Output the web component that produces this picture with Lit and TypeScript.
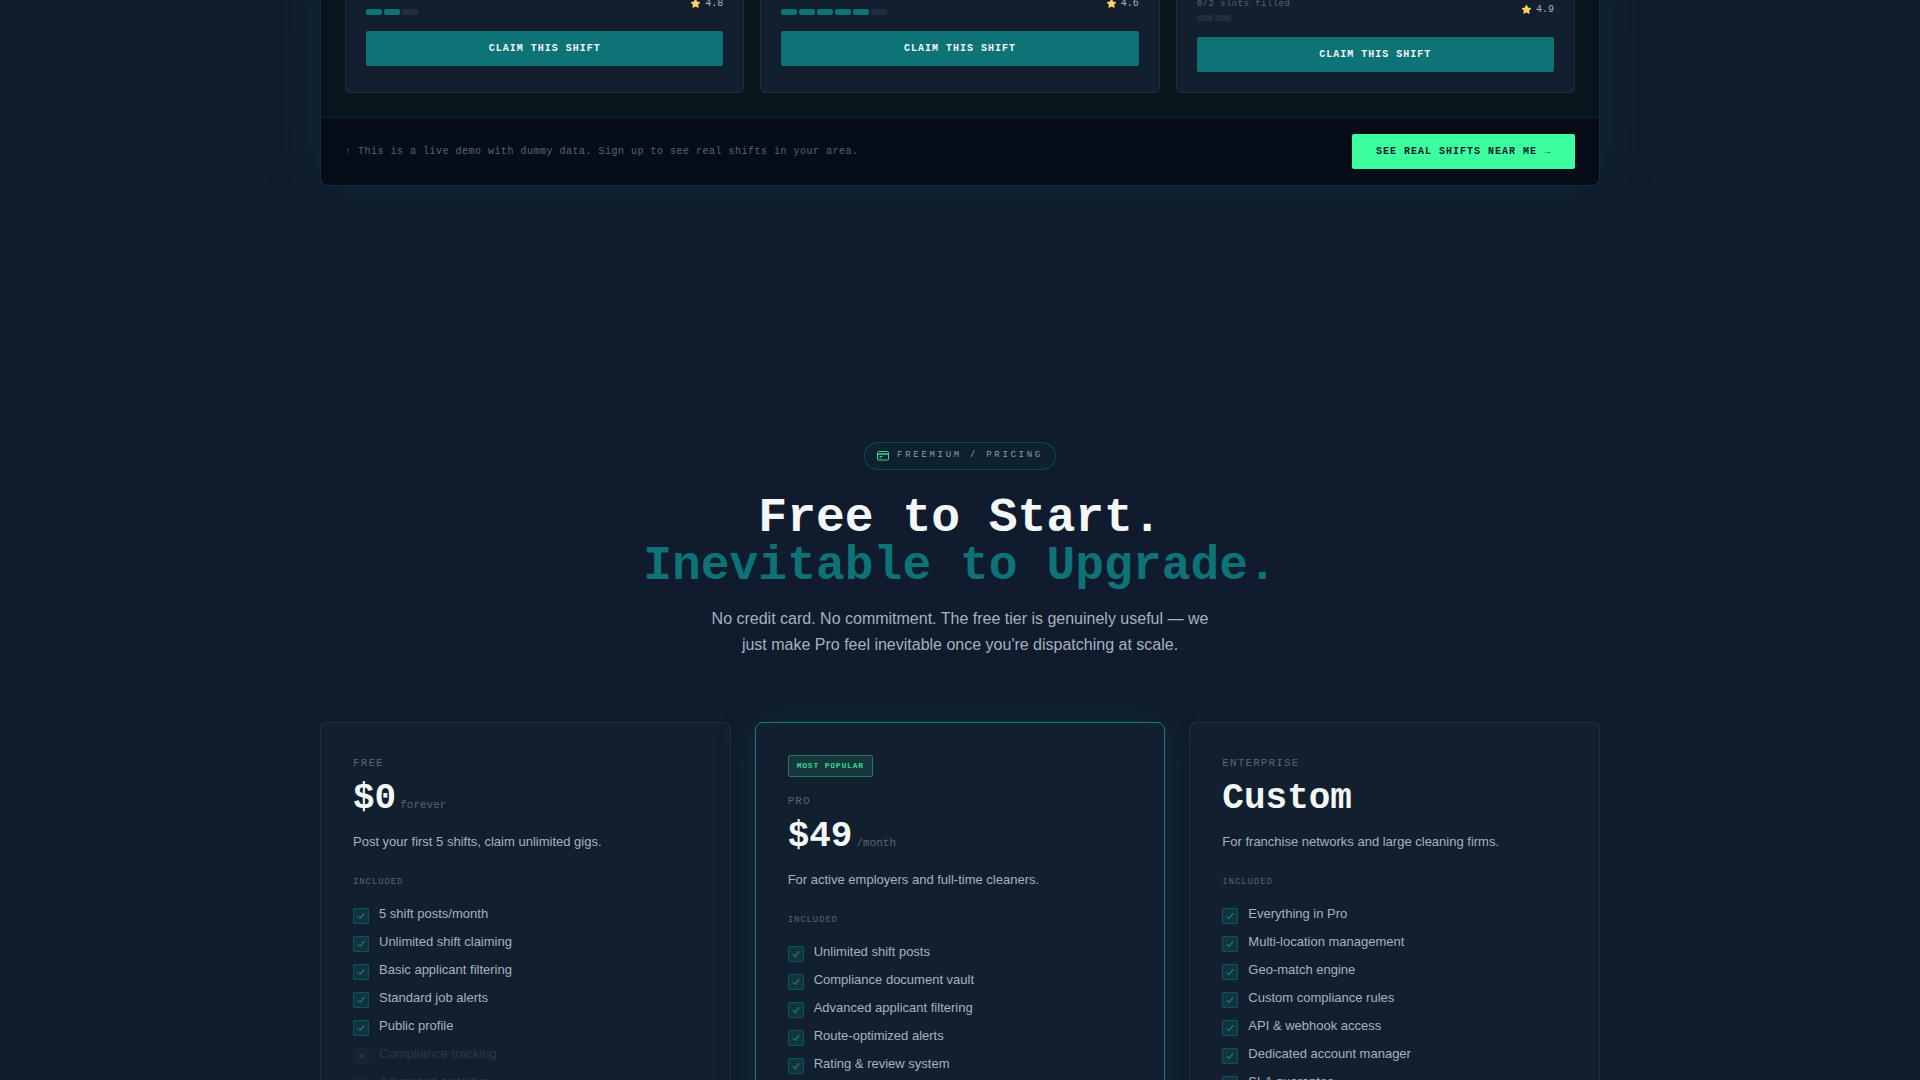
import { LitElement, html, css, svg, nothing } from "lit";
import { customElement, property } from "lit/decorators.js";
import { classMap } from "lit/directives/class-map.js";

interface Shift {
  filled: number;
  total: number;
  rating: string;
  low?: boolean;
}

interface Feature {
  label: string;
  off?: boolean;
}

interface Plan {
  name: string;
  price: string;
  period?: string;
  summary: string;
  badge?: string;
  features: Feature[];
}

const shifts: Shift[] = [
  { filled: 2, total: 3, rating: "4.8" },
  { filled: 5, total: 6, rating: "4.6" },
  { filled: 0, total: 2, rating: "4.9", low: true },
];

const plans: Plan[] = [
  {
    name: "Free",
    price: "$0",
    period: "forever",
    summary: "Post your first 5 shifts, claim unlimited gigs.",
    features: [
      { label: "5 shift posts/month" },
      { label: "Unlimited shift claiming" },
      { label: "Basic applicant filtering" },
      { label: "Standard job alerts" },
      { label: "Public profile" },
      { label: "Compliance tracking", off: true },
      { label: "Advanced analytics", off: true },
    ],
  },
  {
    name: "Pro",
    price: "$49",
    period: "/month",
    summary: "For active employers and full-time cleaners.",
    badge: "Most popular",
    features: [
      { label: "Unlimited shift posts" },
      { label: "Compliance document vault" },
      { label: "Advanced applicant filtering" },
      { label: "Route-optimized alerts" },
      { label: "Rating & review system" },
    ],
  },
  {
    name: "Enterprise",
    price: "Custom",
    summary: "For franchise networks and large cleaning firms.",
    features: [
      { label: "Everything in Pro" },
      { label: "Multi-location management" },
      { label: "Geo-match engine" },
      { label: "Custom compliance rules" },
      { label: "API & webhook access" },
      { label: "Dedicated account manager" },
      { label: "SLA guarantee" },
    ],
  },
];

const tokens = css`
  :host {
    --mono: "Liberation Mono", monospace;
    --sans: "Liberation Sans", sans-serif;
    --teal: #0d7377;
    --mint: #3dffa0;
    --text: #f4f7f8;
    --soft: #a6b2bf;
    --dim: #566573;
    --line: rgba(255, 255, 255, 0.07);
    --card: #121f2e;
  }
  * {
    box-sizing: border-box;
  }
`;

@customElement("shift-card")
class ShiftCard extends LitElement {
  @property({ attribute: false }) shift!: Shift;

  static styles = [
    tokens,
    css`
      :host {
        display: block;
        padding: 20px;
        background: var(--card);
        border: 1px solid var(--line);
        border-radius: 6px;
        font-family: var(--mono);
      }
      .status {
        display: flex;
        align-items: center;
        justify-content: space-between;
        margin-bottom: 16px;
      }
      .low {
        margin-top: 6px;
      }
      .caption {
        margin-bottom: 3px;
        font-size: 9px;
        line-height: 16px;
        letter-spacing: 0.05em;
        color: var(--dim);
      }
      .slots {
        display: flex;
        gap: 2px;
      }
      .slot {
        width: 16px;
        height: 6px;
        border-radius: 2px;
        background: #222e3d;
      }
      .taken {
        background: var(--teal);
      }
      .rating {
        display: flex;
        align-items: center;
        gap: 4px;
        padding-top: 2px;
        font-size: 10px;
        line-height: 17px;
        color: var(--soft);
      }
      .star {
        width: 11px;
        height: 11px;
        fill: #ffd166;
      }
      .claim {
        display: block;
        width: 100%;
        padding: 12px 24px;
        border: 0;
        border-radius: 2px;
        background: var(--teal);
        color: var(--text);
        font: bold 10px/11px var(--mono);
        letter-spacing: 1px;
        text-transform: uppercase;
        cursor: pointer;
      }
    `,
  ];

  render() {
    const { filled, total, rating, low } = this.shift;
    return html`
      <div class=${classMap({ status: true, low: !!low })}>
        <div>
          <div class="caption">${filled}/${total} slots filled</div>
          <div class="slots">
            ${Array.from(
              { length: total },
              (_, i) => html`<span class=${classMap({ slot: true, taken: i < filled })}></span>`
            )}
          </div>
        </div>
        <div class="rating">
          <svg class="star" viewBox="0 0 24 24" aria-hidden="true">
            <path
              d="M12 2c.5 0 .9.300 1.100.700l2.400 5.100 5.600.700c1 .100 1.400 1.400.700 2.100l-4.100 3.900 1.100 5.500c.200 1-.900 1.800-1.800 1.300L12 18.600l-5 2.700c-.900.500-2-.300-1.800-1.300l1.100-5.500-4.100-3.900c-.700-.700-.300-2 .700-2.100l5.600-.700 2.400-5.100c.200-.400.600-.700 1.100-.700z"
            />
          </svg>
          <span>${rating}</span>
        </div>
      </div>
      <button class="claim" type="button">Claim this shift</button>
    `;
  }
}

@customElement("plan-card")
class PlanCard extends LitElement {
  @property({ attribute: false }) plan!: Plan;

  static styles = [
    tokens,
    css`
      :host {
        display: block;
        padding: 32px;
        background: var(--card);
        border: 1px solid var(--line);
        border-radius: 8px;
      }
      :host([featured]) {
        border-color: #157b7a;
        box-shadow: 0 0 40px rgba(13, 115, 119, 0.2);
      }
      .badge {
        display: inline-block;
        vertical-align: top;
        margin-bottom: 16px;
        padding: 4px 8px;
        border: 1px solid #2a7567;
        border-radius: 2px;
        background: #16373b;
        color: #37d592;
        font: bold 8px/12px var(--mono);
        letter-spacing: 0.1em;
        text-transform: uppercase;
      }
      .name {
        margin: 0 0 10px;
        font: 11px/16px var(--mono);
        letter-spacing: 0.1em;
        text-transform: uppercase;
        color: var(--dim);
      }
      .price {
        display: flex;
        align-items: baseline;
        gap: 4px;
        height: 36px;
        margin-bottom: 16px;
        font-family: var(--mono);
      }
      .amount {
        font-size: 36px;
        line-height: 36px;
        font-weight: bold;
        color: var(--text);
      }
      .period {
        font-size: 11px;
        line-height: 18px;
        color: var(--dim);
      }
      .summary {
        margin: 0 0 24px;
        font: 13px/18px var(--sans);
        color: var(--soft);
      }
      .heading {
        margin: 0 0 16px;
        font: 9px/15px var(--mono);
        letter-spacing: 0.1em;
        text-transform: uppercase;
        color: var(--dim);
      }
      .features {
        display: flex;
        flex-direction: column;
        gap: 10px;
        margin: 0;
        padding: 0;
        list-style: none;
      }
      .feature {
        display: flex;
        align-items: flex-start;
        gap: 10px;
        font: 13px/16px var(--sans);
        color: var(--soft);
      }
      .mark {
        display: grid;
        place-items: center;
        width: 16px;
        height: 16px;
        margin-top: 2px;
        border: 1px solid rgba(13, 115, 119, 0.5);
        border-radius: 2px;
        background: rgba(13, 115, 119, 0.25);
        color: #2fa992;
      }
      .mark svg {
        width: 8px;
        height: 8px;
        fill: none;
        stroke: currentColor;
        stroke-linecap: round;
        stroke-linejoin: round;
      }
      .off {
        color: #2b3847;
      }
      .off .mark {
        border-color: #182533;
        background: #172432;
        color: #3a4855;
      }
    `,
  ];

  render() {
    const { name, price, period, summary, badge, features } = this.plan;
    return html`
      ${badge ? html`<span class="badge">${badge}</span>` : nothing}
      <h3 class="name">${name}</h3>
      <div class="price">
        <span class="amount">${price}</span>
        ${period ? html`<span class="period">${period}</span>` : nothing}
      </div>
      <p class="summary">${summary}</p>
      <h4 class="heading">Included</h4>
      <ul class="features">
        ${features.map(
          (f) => html`
            <li class=${classMap({ feature: true, off: !!f.off })}>
              <span class="mark">
                <svg viewBox="0 0 8 8" aria-hidden="true">
                  ${f.off
                    ? svg`<path d="M2.200 2.200l3.600 3.600M5.800 2.200l-3.600 3.600" stroke-width="0.800" />`
                    : svg`<path d="M1 4.500l2 2L7 1.500" stroke-width="0.900" />`}
                </svg>
              </span>
              <span>${f.label}</span>
            </li>
          `
        )}
      </ul>
    `;
  }
}

@customElement("app-root")
class AppRoot extends LitElement {
  static styles = [
    tokens,
    css`
      :host {
        display: block;
      }
      .page {
        height: 100vh;
        overflow: hidden;
        padding: 0 24px;
        background: #101b2d;
      }
      .container {
        display: flow-root;
        max-width: 1280px;
        margin: 0 auto;
      }
      .demo {
        margin-top: -31px;
        border: 1px solid rgba(13, 115, 119, 0.3);
        border-top: 0;
        border-radius: 0 0 8px 8px;
        background: #09151d;
        box-shadow: 0 0 60px rgba(13, 115, 110, 0.17);
      }
      .shifts {
        display: grid;
        grid-template-columns: repeat(3, 1fr);
        gap: 16px;
        padding: 0 24px 24px;
      }
      .bar {
        display: flex;
        align-items: center;
        justify-content: space-between;
        padding: 16px 24px;
        border-top: 1px solid rgba(13, 115, 119, 0.25);
        border-radius: 0 0 8px 8px;
        background: #060d18;
      }
      .note {
        margin: 0;
        font: 10px/16px var(--mono);
        letter-spacing: 0.05em;
        color: var(--dim);
      }
      .cta {
        padding: 12px 24px;
        border-radius: 2px;
        background: var(--mint);
        color: #0f1a2c;
        font: bold 10px/11px var(--mono);
        letter-spacing: 1px;
        text-transform: uppercase;
        text-decoration: none;
      }
      .pricing {
        display: flex;
        flex-direction: column;
        align-items: center;
        padding-top: 256px;
      }
      .pill {
        display: flex;
        align-items: center;
        gap: 8px;
        margin-bottom: 24px;
        padding: 5px 12px 7px;
        border: 1px solid rgba(13, 115, 119, 0.5);
        border-radius: 14px;
        background: #0f202e;
        color: #8f9dab;
        font: 9px/14px var(--mono);
        letter-spacing: 0.3em;
        text-transform: uppercase;
      }
      .pill svg {
        width: 12px;
        height: 14px;
        fill: none;
        stroke: #37d592;
        stroke-width: 2;
        stroke-linejoin: round;
      }
      .title {
        margin: 0 0 16px;
        font: bold 48px/48px var(--mono);
        text-align: center;
        color: var(--text);
      }
      .accent {
        display: block;
        color: var(--teal);
      }
      .lead {
        max-width: 520px;
        margin: 0 0 64px;
        font: 16px/26px var(--sans);
        text-align: center;
        color: var(--soft);
      }
      .plans {
        display: grid;
        grid-template-columns: repeat(3, 1fr);
        gap: 24px;
        width: 100%;
      }
    `,
  ];

  render() {
    return html`
      <main class="page">
        <div class="container">
          <section class="demo">
            <div class="shifts">
              ${shifts.map((s) => html`<shift-card .shift=${s}></shift-card>`)}
            </div>
            <div class="bar">
              <p class="note">
                ↑ This is a live demo with dummy data. Sign up to see real shifts in your area.
              </p>
              <a class="cta" href="#signup">See real shifts near me →</a>
            </div>
          </section>
          <section class="pricing">
            <div class="pill">
              <svg viewBox="0 0 24 28" aria-hidden="true">
                <rect x="1" y="7" width="22" height="17" rx="2" />
                <path d="M1 12h22" stroke-width="3" />
                <path d="M5 17h6M5 20.500h3" />
              </svg>
              <span>Freemium / Pricing</span>
            </div>
            <h2 class="title">Free to Start.<span class="accent">Inevitable to Upgrade.</span></h2>
            <p class="lead">
              No credit card. No commitment. The free tier is genuinely useful — we just make Pro
              feel inevitable once you're dispatching at scale.
            </p>
            <div class="plans">
              ${plans.map(
                (p) => html`<plan-card .plan=${p} ?featured=${!!p.badge}></plan-card>`
              )}
            </div>
          </section>
        </div>
      </main>
    `;
  }
}
